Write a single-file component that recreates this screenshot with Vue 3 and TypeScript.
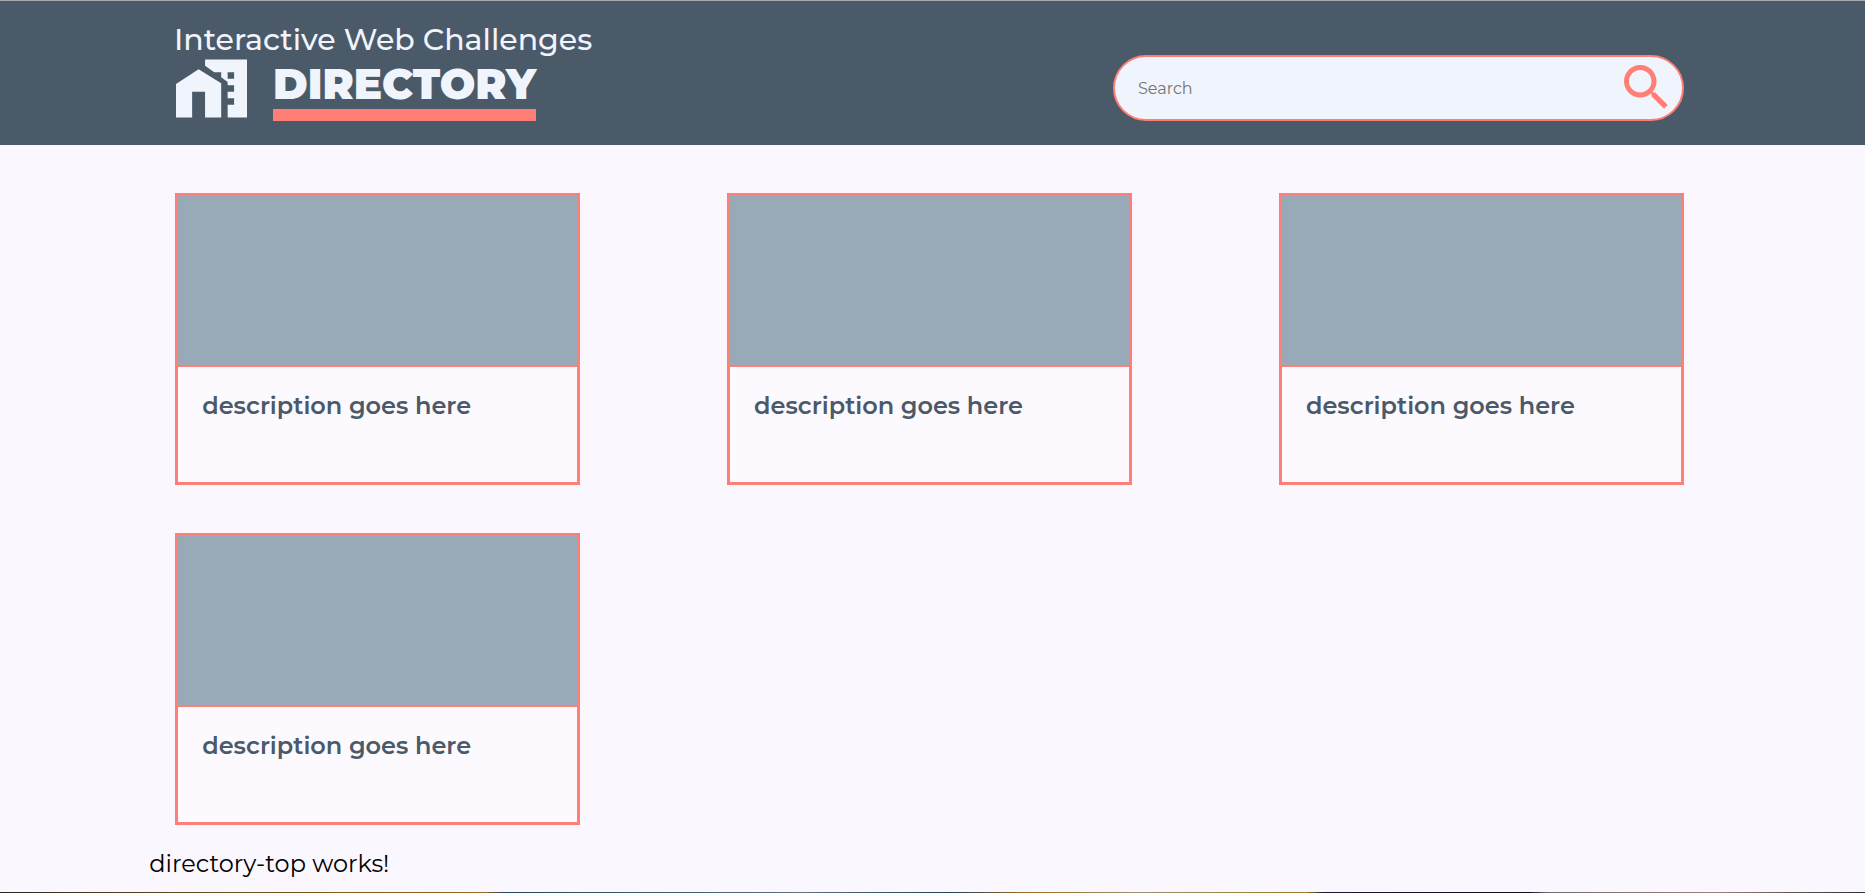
<script setup lang="ts">
import { ref } from 'vue'

interface Challenge {
  id: number
  description: string
}

const query = ref('')
const challenges: Challenge[] = [1, 2, 3, 4].map((id) => ({
  id,
  description: 'description goes here',
}))
</script>

<template>
  <div class="page">
    <header class="header">
      <div class="brand">
        <p class="tagline">Interactive Web Challenges</p>
        <div class="logo">
          <svg class="logo-icon" viewBox="1 3 22 18" aria-hidden="true">
            <path d="M1 11v10h5v-8h4v8h5V10.4L8 6 1 10.6z" />
            <path
              fill-rule="evenodd"
              d="M10 3v1.97L12.84 7H15v1.54l2 1.43V11h2v2h-2v2h2v2h-2v4h6V3H10zm9 6h-2V7h2v2z"
            />
          </svg>
          <h1 class="title">DIRECTORY</h1>
        </div>
      </div>
      <form class="search" role="search" @submit.prevent>
        <input v-model="query" class="search-input" type="text" placeholder="Search" aria-label="Search" />
        <button class="search-button" type="submit" aria-label="Submit search">
          <svg viewBox="3 3 18 18" aria-hidden="true">
            <path
              d="M15.5 14h-.79l-.28-.27C15.41 12.59 16 11.11 16 9.5 16 5.91 13.09 3 9.5 3S3 5.91 3 9.5 5.91 16 9.5 16c1.61 0 3.09-.59 4.23-1.57l.27.28v.79l5 4.99L20.49 19l-4.99-5zm-6 0C7.01 14 5 11.99 5 9.5S7.01 5 9.5 5 14 7.01 14 9.5 11.99 14 9.5 14z"
            />
          </svg>
        </button>
      </form>
    </header>

    <main class="main">
      <section class="grid">
        <article v-for="challenge in challenges" :key="challenge.id" class="card">
          <div class="thumb"></div>
          <div class="card-body">
            <p class="description">{{ challenge.description }}</p>
          </div>
        </article>
      </section>
      <p class="status">directory-top works!</p>
    </main>
    <div class="strip"></div>
  </div>
</template>

<style>
body {
  margin: 0;
  background: #faf7fe;
}
</style>

<style scoped>
* {
  box-sizing: border-box;
}

p,
h1 {
  margin: 0;
}

.page {
  display: flex;
  flex-direction: column;
  min-height: 100vh;
  font-family: Montserrat, Inter, sans-serif;
  color: #000;
}

.header {
  display: flex;
  justify-content: space-between;
  align-items: flex-end;
  padding: 20px 181px 24px 174px;
  border-top: 1px solid #aaa9ad;
  background: #4a5a69;
}

.tagline {
  color: #f0f4fc;
  font-size: 30px;
  font-weight: 500;
  line-height: 38px;
}

.logo {
  display: flex;
  align-items: flex-start;
  gap: 26px;
}

.logo-icon {
  width: 71px;
  height: 59px;
  margin-left: 2px;
  fill: #f0f4fc;
}

.title {
  border-bottom: 12px solid #ff7e75;
  color: #f0f4fc;
  font-size: 42px;
  font-weight: 900;
  line-height: 50px;
}

.search {
  display: flex;
  align-items: center;
  width: 571px;
  height: 66px;
  padding: 0 13px 0 23px;
  border: 2px solid #ff7e75;
  border-radius: 33px;
  background: #f0f4fc;
}

.search-input {
  flex: 1;
  min-width: 0;
  padding: 0;
  border: 0;
  outline: 0;
  background: transparent;
  color: #4a5a69;
  font: inherit;
  font-size: 16px;
}

.search-input::placeholder {
  color: #757575;
}

.search-button {
  display: flex;
  padding: 0 0 2px;
  border: 0;
  background: none;
  cursor: pointer;
}

.search-button svg {
  width: 45px;
  height: 45px;
  fill: #ff7e75;
}

.main {
  padding: 48px 8% 0;
}

.grid {
  display: grid;
  grid-template-columns: repeat(3, 1fr);
  gap: 48px 147px;
  margin: 0 32px 0 26px;
}

.card {
  border: 2px solid #ff7e75;
}

.thumb {
  height: 170px;
  background: #98a9b7;
}

.card-body {
  min-height: 118px;
  padding: 24px;
  border: 1px solid #ff7e75;
  border-top-width: 2px;
  background: #fcf9ff;
}

.description {
  color: #4a5a69;
  font-size: 24px;
  font-weight: 600;
  line-height: 30px;
}

.status {
  margin-top: 24px;
  font-size: 24px;
  line-height: 30px;
}

.strip {
  height: 1px;
  margin-top: auto;
  background: linear-gradient(
    90deg,
    #2c2421 0%,
    #70501f 12%,
    #9a6621 26%,
    #244363 27%,
    #5d7180 43%,
    #243d60 51%,
    #a06a20 55%,
    #9b8f70 61%,
    #a07a25 70%,
    #1b1732 71%,
    #160b25 82%,
    #756a70 83%,
    #9b8178 92%,
    #302d34 100%
  );
}
</style>
